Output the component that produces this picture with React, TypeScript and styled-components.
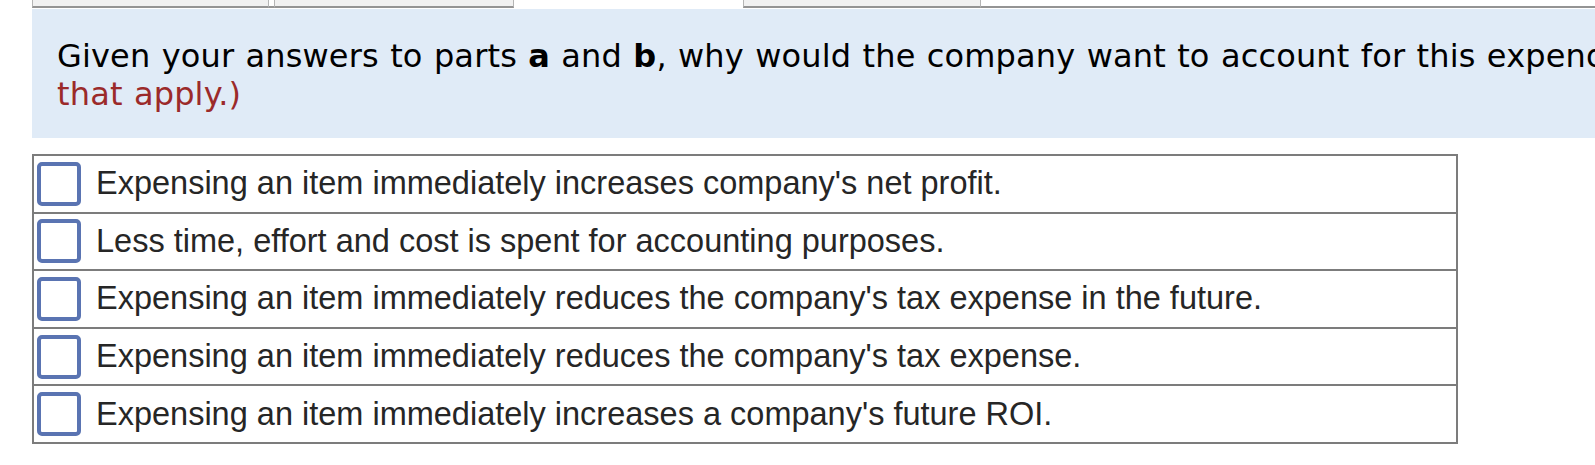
import React from "react";
import styled, { createGlobalStyle } from "styled-components";

const Global = createGlobalStyle`
  html, body {
    margin: 0;
    padding: 0;
    background: #ffffff;
    overflow: hidden;
  }
`;

const Page = styled.div`
  width: 1595px;
  height: 465px;
  overflow: hidden;
  padding-left: 32px;
  box-sizing: border-box;
`;

const TabStrip = styled.div`
  display: flex;
  height: 8px;
`;

const Tab = styled.div<{ $w: number; $active?: boolean }>`
  flex: 0 0 ${(p) => p.$w}px;
  box-sizing: border-box;
  height: 8px;
  background: ${(p) => (p.$active ? "#ffffff" : "#f1f1f1")};
  border-left: ${(p) => (p.$active ? "none" : "1px solid #b5b5b5")};
  border-right: ${(p) => (p.$active ? "none" : "1px solid #b5b5b5")};
  border-bottom: ${(p) => (p.$active ? "none" : "2px solid #949494")};
`;

const TabGap = styled.div<{ $w?: number }>`
  flex: ${(p) => (p.$w ? `0 0 ${p.$w}px` : "1 1 auto")};
  box-sizing: border-box;
  height: 8px;
  border-bottom: 2px solid #949494;
`;

const Prompt = styled.div`
  margin-top: 1px;
  background: #e0ebf7;
  padding: 28px 0 25px 25px;
  font-family: "DejaVu Sans", Verdana, sans-serif;
  font-size: 32px;
  letter-spacing: 0.15px;
  word-spacing: 1px;
  line-height: 38px;
  color: #000000;
  white-space: nowrap;
  width: 2800px;
`;

const Line = styled.div``;

const Hint = styled.span`
  color: #9b2a2a;
`;

const Choices = styled.div`
  margin-top: 16px;
  width: 1426px;
  box-sizing: border-box;
  border: 2px solid #7c7c7c;
  border-bottom: none;
`;

const Row = styled.label`
  display: flex;
  align-items: center;
  height: 57.6px;
  box-sizing: border-box;
  border-bottom: 2px solid #7c7c7c;
  padding-left: 3px;
  gap: 15px;
  font-family: "Liberation Sans", Arial, sans-serif;
  font-size: 32.5px;
  color: #262626;
`;

const Box = styled.span`
  flex: 0 0 44px;
  height: 44px;
  box-sizing: border-box;
  border: 4px solid #5a74b2;
  border-radius: 5px;
  background: #ffffff;
`;

const options = [
  "Expensing an item immediately increases company's net profit.",
  "Less time, effort and cost is spent for accounting purposes.",
  "Expensing an item immediately reduces the company's tax expense in the future.",
  "Expensing an item immediately reduces the company's tax expense.",
  "Expensing an item immediately increases a company's future ROI.",
];

export default function App() {
  return (
    <Page>
      <Global />
      <TabStrip>
        <Tab $w={237} />
        <TabGap $w={5} />
        <Tab $w={240} />
        <Tab $w={229} $active />
        <Tab $w={238} />
        <TabGap />
      </TabStrip>
      <Prompt>
        <Line>
          Given your answers to parts <b>a</b> and <b>b</b>, why would the company want to
          account for this expenditure as an expense? <Hint>(Select all</Hint>
        </Line>
        <Line>
          <Hint>that apply.)</Hint>
        </Line>
      </Prompt>
      <Choices>
        {options.map((o) => (
          <Row key={o}>
            <Box />
            <span>{o}</span>
          </Row>
        ))}
      </Choices>
    </Page>
  );
}
